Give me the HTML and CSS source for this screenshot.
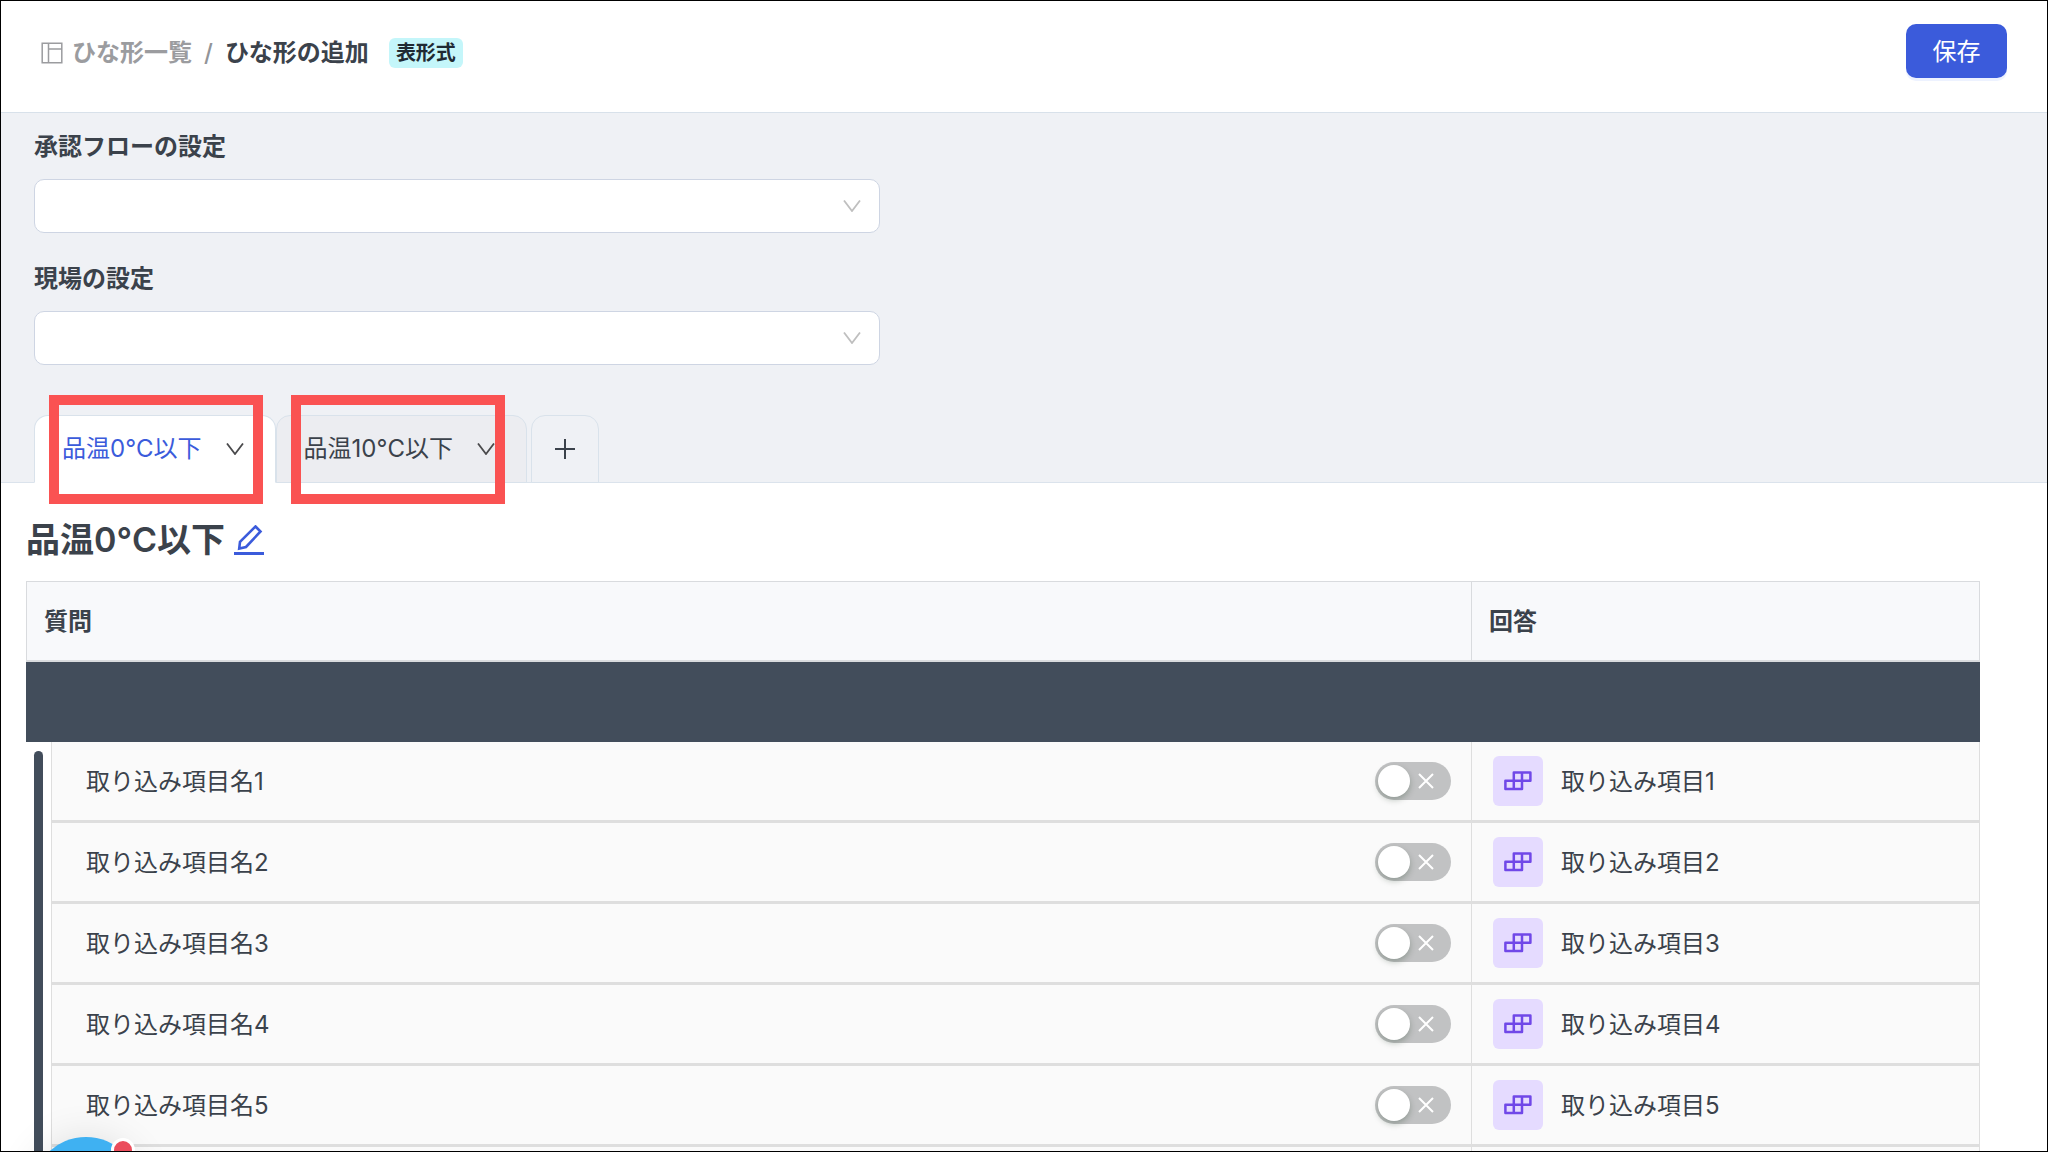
FILE: index.html
```html
<!DOCTYPE html>
<html lang="ja">
<head>
<meta charset="utf-8">
<meta name="viewport" content="width=device-width, initial-scale=1">
<title>ひな形の追加</title>
<link rel="stylesheet" href="styles.css">
</head>
<body>
<svg class="sprite" aria-hidden="true">
  <symbol id="chevron" viewBox="0 0 18 12"><path d="M1 .5 9 11 17 .5" fill="none" stroke="currentColor" stroke-width="1.8"/></symbol>
  <symbol id="cells" viewBox="0 0 30 22"><g fill="none" stroke="currentColor" stroke-width="2.5" stroke-linejoin="round"><path d="M10.8 2.6h16.6v8.2H10.8zM2.4 10.8H19V19H2.4zM10.8 10.8V19M19 2.6v8.2"/></g></symbol>
</svg>
<div class="app">
  <header class="header">
    <nav class="breadcrumb" aria-label="パンくず">
      <a class="crumb-link" href="#">
        <svg class="crumb-icon" viewBox="0 0 22 22" aria-hidden="true"><path d="M1.2 1.2h19.6v19.6H1.2zM7.5 1.2v19.6M7.5 7h13.3" fill="none" stroke="currentColor" stroke-width="1.5"/></svg>
        <span>ひな形一覧</span>
      </a>
      <span class="crumb-separator">/</span>
      <span class="crumb-current">ひな形の追加</span>
      <span class="badge">表形式</span>
    </nav>
    <button class="save" type="button">保存</button>
  </header>

  <section class="settings">
    <div class="field">
      <label class="field-label" for="flow">承認フローの設定</label>
      <div class="select-wrap">
        <select class="select" id="flow"><option></option></select>
        <svg class="chevron select-arrow" aria-hidden="true"><use href="#chevron"/></svg>
      </div>
    </div>
    <div class="field">
      <label class="field-label" for="site">現場の設定</label>
      <div class="select-wrap">
        <select class="select" id="site"><option></option></select>
        <svg class="chevron select-arrow" aria-hidden="true"><use href="#chevron"/></svg>
      </div>
    </div>
    <div class="tabs">
      <div class="tab tab-active">
        <button class="tab-label" type="button">品温0°C以下</button>
        <button class="tab-menu" type="button" aria-label="メニュー"><svg class="chevron" aria-hidden="true"><use href="#chevron"/></svg></button>
      </div>
      <div class="tab">
        <button class="tab-label" type="button">品温10°C以下</button>
        <button class="tab-menu" type="button" aria-label="メニュー"><svg class="chevron" aria-hidden="true"><use href="#chevron"/></svg></button>
      </div>
      <button class="tab-add" type="button" aria-label="追加"><svg class="plus" viewBox="0 0 20 20" aria-hidden="true"><path d="M10 0v20M0 10h20" stroke="currentColor" stroke-width="2"/></svg></button>
    </div>
  </section>

  <main class="content">
    <div class="title-row">
      <h1 class="title">品温0°C以下</h1>
      <button class="edit" type="button" aria-label="編集"><svg class="edit-icon" viewBox="0 0 30 30" aria-hidden="true"><path d="M21.5 1.5 26.500 6.500 12 22 5.200 23.500 6 16.800z" fill="none" stroke="currentColor" stroke-width="2.600"/><path d="M0 28.500h30" stroke="currentColor" stroke-width="3"/></svg></button>
    </div>
    <table class="table">
      <colgroup><col class="col-gutter"><col><col class="col-answer"></colgroup>
      <thead>
        <tr class="head-row"><th colspan="2" scope="col">質問</th><th scope="col">回答</th></tr>
      </thead>
      <tbody>
        <tr class="group-row"><td colspan="3"></td></tr>
        <tr class="item-row">
          <td class="gutter" rowspan="6"></td>
          <td><div class="question"><label class="item-text" for="s1">取り込み項目名1</label><span class="switch"><input class="switch-input" type="checkbox" id="s1"><svg class="switch-x" viewBox="0 0 16 16" aria-hidden="true"><path d="M1 1 15 15M15 1 1 15" stroke="currentColor" stroke-width="2"/></svg></span></div></td>
          <td><div class="answer"><span class="answer-icon"><svg class="cells" aria-hidden="true"><use href="#cells"/></svg></span><span class="item-text">取り込み項目1</span></div></td>
        </tr>
        <tr class="item-row">
          <td><div class="question"><label class="item-text" for="s2">取り込み項目名2</label><span class="switch"><input class="switch-input" type="checkbox" id="s2"><svg class="switch-x" viewBox="0 0 16 16" aria-hidden="true"><path d="M1 1 15 15M15 1 1 15" stroke="currentColor" stroke-width="2"/></svg></span></div></td>
          <td><div class="answer"><span class="answer-icon"><svg class="cells" aria-hidden="true"><use href="#cells"/></svg></span><span class="item-text">取り込み項目2</span></div></td>
        </tr>
        <tr class="item-row">
          <td><div class="question"><label class="item-text" for="s3">取り込み項目名3</label><span class="switch"><input class="switch-input" type="checkbox" id="s3"><svg class="switch-x" viewBox="0 0 16 16" aria-hidden="true"><path d="M1 1 15 15M15 1 1 15" stroke="currentColor" stroke-width="2"/></svg></span></div></td>
          <td><div class="answer"><span class="answer-icon"><svg class="cells" aria-hidden="true"><use href="#cells"/></svg></span><span class="item-text">取り込み項目3</span></div></td>
        </tr>
        <tr class="item-row">
          <td><div class="question"><label class="item-text" for="s4">取り込み項目名4</label><span class="switch"><input class="switch-input" type="checkbox" id="s4"><svg class="switch-x" viewBox="0 0 16 16" aria-hidden="true"><path d="M1 1 15 15M15 1 1 15" stroke="currentColor" stroke-width="2"/></svg></span></div></td>
          <td><div class="answer"><span class="answer-icon"><svg class="cells" aria-hidden="true"><use href="#cells"/></svg></span><span class="item-text">取り込み項目4</span></div></td>
        </tr>
        <tr class="item-row">
          <td><div class="question"><label class="item-text" for="s5">取り込み項目名5</label><span class="switch"><input class="switch-input" type="checkbox" id="s5"><svg class="switch-x" viewBox="0 0 16 16" aria-hidden="true"><path d="M1 1 15 15M15 1 1 15" stroke="currentColor" stroke-width="2"/></svg></span></div></td>
          <td><div class="answer"><span class="answer-icon"><svg class="cells" aria-hidden="true"><use href="#cells"/></svg></span><span class="item-text">取り込み項目5</span></div></td>
        </tr>
        <tr class="item-row"><td></td><td></td></tr>
      </tbody>
    </table>
  </main>

  <button class="chat" type="button" aria-label="チャット"><span class="chat-dot"></span></button>
</div>
</body>
</html>
```
FILE: styles.css
```css
*, *::before, *::after { box-sizing: border-box; }

body {
  margin: 0;
  color: #3b424b;
  background: #fff;
  font-family: Inter, "Noto Sans CJK JP", sans-serif;
  font-size: 24px;
  line-height: 36px;
}

button, select {
  margin: 0;
  padding: 0;
  border: 0;
  background: none;
  color: inherit;
  font: inherit;
}

.sprite { position: absolute; width: 0; height: 0; }

.app {
  position: relative;
  height: 100vh;
  overflow: hidden;
  border: 1px solid #000;
}

/* Header */
.header {
  display: flex;
  align-items: flex-start;
  justify-content: space-between;
  height: 112px;
  padding: 23px 40px 0;
  border-bottom: 1px solid #d8e1ea;
}

.breadcrumb { display: flex; align-items: center; height: 58px; font-weight: 600; }
.crumb-link { display: flex; align-items: center; gap: 9px; color: #9b9c9f; text-decoration: none; }
.crumb-icon { width: 22px; height: 22px; }
.crumb-separator { margin: 0 12px; color: #929498; font-weight: 500; }

.badge {
  margin-left: 20px;
  padding: 0 7px;
  border-radius: 6px;
  background: #c4f6fa;
  color: #1f2a33;
  font-size: 20px;
  line-height: 30px;
}

.save {
  width: 101px;
  height: 54px;
  padding-top: 2px;
  border-radius: 10px;
  background: #3b5bdb;
  box-shadow: 0 3px 0 #edf2ff;
  color: #fff;
}

/* Settings */
.settings {
  padding: 16px 33px 0;
  border-bottom: 1px solid #dbe3ec;
  background: #eff1f5;
}

.field { width: 43%; max-width: 846px; margin-bottom: 28px; }
.field-label { display: block; margin-bottom: 14px; font-weight: 600; }
.select-wrap { position: relative; }

.select {
  display: block;
  width: 100%;
  height: 54px;
  padding: 0 52px 0 18px;
  border: 1px solid #ced5e3;
  border-radius: 10px;
  background: #fff;
  appearance: none;
}

.chevron { display: block; width: 18px; height: 12px; }
.select-arrow { position: absolute; top: 21px; right: 19px; color: #bfbfbf; pointer-events: none; }

/* Tabs */
.tabs { display: flex; margin: 50px 0 -1px; }

.tab {
  position: relative;
  display: flex;
  align-items: center;
  gap: 24px;
  height: 68px;
  padding: 0 31px 0 27px;
  border: 1px solid #d9e2eb;
  border-radius: 14px 14px 0 0;
  background: #ecedf1;
}

.tab-active { border-bottom-color: #fff; background: #fff; }
.tab-active .tab-label { color: #3b5bdb; }
.tab-menu { color: #4a4a4c; }

.tab::after {
  content: "";
  position: absolute;
  top: -21px;
  left: 14px;
  width: 214px;
  height: 109px;
  border: 10px solid #fa5252;
  pointer-events: none;
}

.tab-add {
  display: grid;
  place-items: center;
  width: 68px;
  height: 68px;
  margin-left: 4px;
  border: 1px solid #d9e2eb;
  border-radius: 14px 14px 0 0;
}

.plus { width: 20px; height: 20px; }

/* Content */
.content { padding: 33px 67px 0 25px; }
.title-row { display: flex; align-items: center; gap: 9px; height: 48px; margin-bottom: 17px; }
.title { margin: 0; font-size: 34px; font-weight: 600; line-height: 48px; }
.edit { color: #3b5bdb; }
.edit-icon { display: block; width: 30px; height: 30px; }

.table { width: 100%; table-layout: fixed; border-collapse: separate; border-spacing: 0; }
.col-gutter { width: 25px; }
.col-answer { width: 26%; }

.table th, .table td { padding: 0; }

.head-row th {
  height: 81px;
  padding: 2px 17px 0;
  border: 1px solid #d9dbde;
  border-width: 1px 1px 2px 0;
  background: #f8f9fb;
  font-weight: 600;
  text-align: left;
}

.table .head-row th { padding: 2px 17px 0; }
.head-row th:first-child { border-left-width: 1px; }
.group-row td { height: 80px; background: #424d5b; }

.item-row td {
  height: 81px;
  border: 1px solid #dedede;
  border-width: 0 1px 3px 0;
  background: #fafafa;
}

.item-row td:nth-last-child(2) { border-left-width: 1px; }

.table .gutter {
  padding: 9px 8px 0;
  border: 0;
  background: none;
  vertical-align: top;
}

.gutter::before {
  content: "";
  display: block;
  width: 9px;
  height: 477px;
  border-radius: 5px;
  background: #424d5b;
}

.question { display: flex; align-items: center; justify-content: space-between; padding: 0 20px 0 34px; }
.answer { display: flex; align-items: center; gap: 18px; padding-left: 21px; }
.item-text { padding-top: 2px; }

.switch { position: relative; display: block; }

.switch-input {
  display: block;
  width: 76px;
  height: 38px;
  margin: 0;
  padding: 3px;
  border-radius: 19px;
  background: #c1c2c3;
  appearance: none;
}

.switch-input::before {
  content: "";
  display: block;
  width: 32px;
  height: 32px;
  border-radius: 50%;
  background: #fff;
  box-shadow: 0 3px 6px rgba(0, 35, 11, 0.25);
}

.switch-input:checked { background: #3b5bdb; }
.switch-input:checked::before { margin-left: auto; }
.switch-x { position: absolute; top: 11px; right: 17px; width: 16px; height: 16px; color: #fff; pointer-events: none; }
.switch-input:checked + .switch-x { display: none; }

.answer-icon {
  display: grid;
  place-items: center;
  width: 50px;
  height: 50px;
  border-radius: 6px;
  background: #e5dbff;
  color: #7048e8;
}

.cells { width: 30px; height: 22px; }

/* Chat launcher, mostly below the fold */
.chat {
  position: absolute;
  left: 31px;
  bottom: -94px;
  width: 108px;
  height: 108px;
  border-radius: 50%;
  background: #3fb1f2;
  box-shadow: 0 2px 40px rgba(0, 0, 0, 0.12);
}

.chat-dot {
  position: absolute;
  top: 1px;
  right: 5px;
  width: 24px;
  height: 24px;
  border: 3px solid #fff;
  border-radius: 50%;
  background: #eb4d5c;
}
```
